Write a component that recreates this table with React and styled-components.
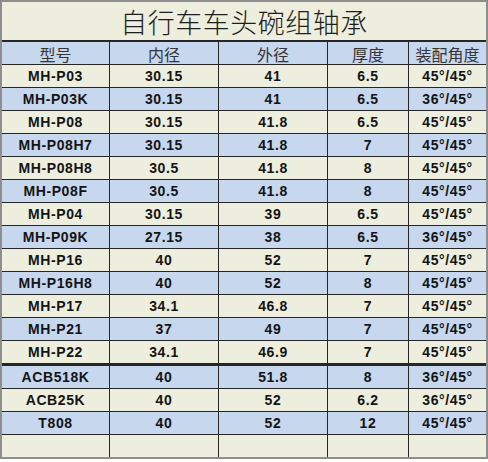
import React from "react";
import styled, { createGlobalStyle } from "styled-components";

const GlobalStyle = createGlobalStyle`
  body {
    margin: 0;
    background: #ffffff;
  }
`;

const CREAM = "#edeedd";
const BLUE = "#c6d7ee";
const LINE = "#262626";

const Sheet = styled.div`
  width: 488px;
  box-sizing: border-box;
  border: 2px solid #8e8e8e;
  background: ${CREAM};
`;

const Title = styled.div`
  height: 38px;
  display: flex;
  align-items: center;
  justify-content: center;
  border-bottom: 2px solid ${LINE};
  font-family: "Noto Sans CJK SC", "Noto Sans", sans-serif;
  font-weight: 300;
  font-size: 27px;
  letter-spacing: 0.5px;
  color: #1e1e1e;
`;

const Row = styled.div`
  display: grid;
  grid-template-columns: 108px 109px 109px 81px 77px;
  height: 22px;
  background: ${props => (props.$tone === "blue" ? BLUE : CREAM)};
  border-bottom: ${props => props.$rule}px solid ${LINE};

  &:last-child {
    border-bottom: none;
  }
`;

const Cell = styled.div`
  box-sizing: border-box;
  display: flex;
  align-items: center;
  justify-content: center;
  border-right: 1px solid ${LINE};
  font-family: "Liberation Sans", Arial, sans-serif;
  font-weight: 700;
  font-size: 14px;
  letter-spacing: 0.6px;
  color: #141414;
  padding-bottom: 1px;

  &:last-child {
    border-right: none;
  }
`;

const HeadCell = styled(Cell)`
  font-family: "Noto Sans CJK SC", "Noto Sans", sans-serif;
  font-weight: 400;
  font-size: 16px;
  letter-spacing: 0;
  color: #353535;
`;

const header = ["型号", "内径", "外径", "厚度", "装配角度"];

const bearings = [
  ["MH-P03", "30.15", "41", "6.5", "45°/45°"],
  ["MH-P03K", "30.15", "41", "6.5", "36°/45°"],
  ["MH-P08", "30.15", "41.8", "6.5", "45°/45°"],
  ["MH-P08H7", "30.15", "41.8", "7", "45°/45°"],
  ["MH-P08H8", "30.5", "41.8", "8", "45°/45°"],
  ["MH-P08F", "30.5", "41.8", "8", "45°/45°"],
  ["MH-P04", "30.15", "39", "6.5", "45°/45°"],
  ["MH-P09K", "27.15", "38", "6.5", "36°/45°"],
  ["MH-P16", "40", "52", "7", "45°/45°"],
  ["MH-P16H8", "40", "52", "8", "45°/45°"],
  ["MH-P17", "34.1", "46.8", "7", "45°/45°"],
  ["MH-P21", "37", "49", "7", "45°/45°"],
  ["MH-P22", "34.1", "46.9", "7", "45°/45°"],
  ["ACB518K", "40", "51.8", "8", "36°/45°"],
  ["ACB25K", "40", "52", "6.2", "36°/45°"],
  ["T808", "40", "52", "12", "45°/45°"],
  ["", "", "", "", ""],
];

export default function App() {
  return (
    <>
      <GlobalStyle />
      <Sheet>
        <Title>自行车车头碗组轴承</Title>
        <Row $tone="blue" $rule={1}>
          {header.map(h => (
            <HeadCell key={h}>{h}</HeadCell>
          ))}
        </Row>
        {bearings.map((row, i) => (
          <Row
            key={i}
            $tone={i % 2 ? "blue" : "cream"}
            $rule={row[0] === "MH-P22" ? 3 : 1}
          >
            {row.map((v, j) => (
              <Cell key={j}>{v}</Cell>
            ))}
          </Row>
        ))}
      </Sheet>
    </>
  );
}
